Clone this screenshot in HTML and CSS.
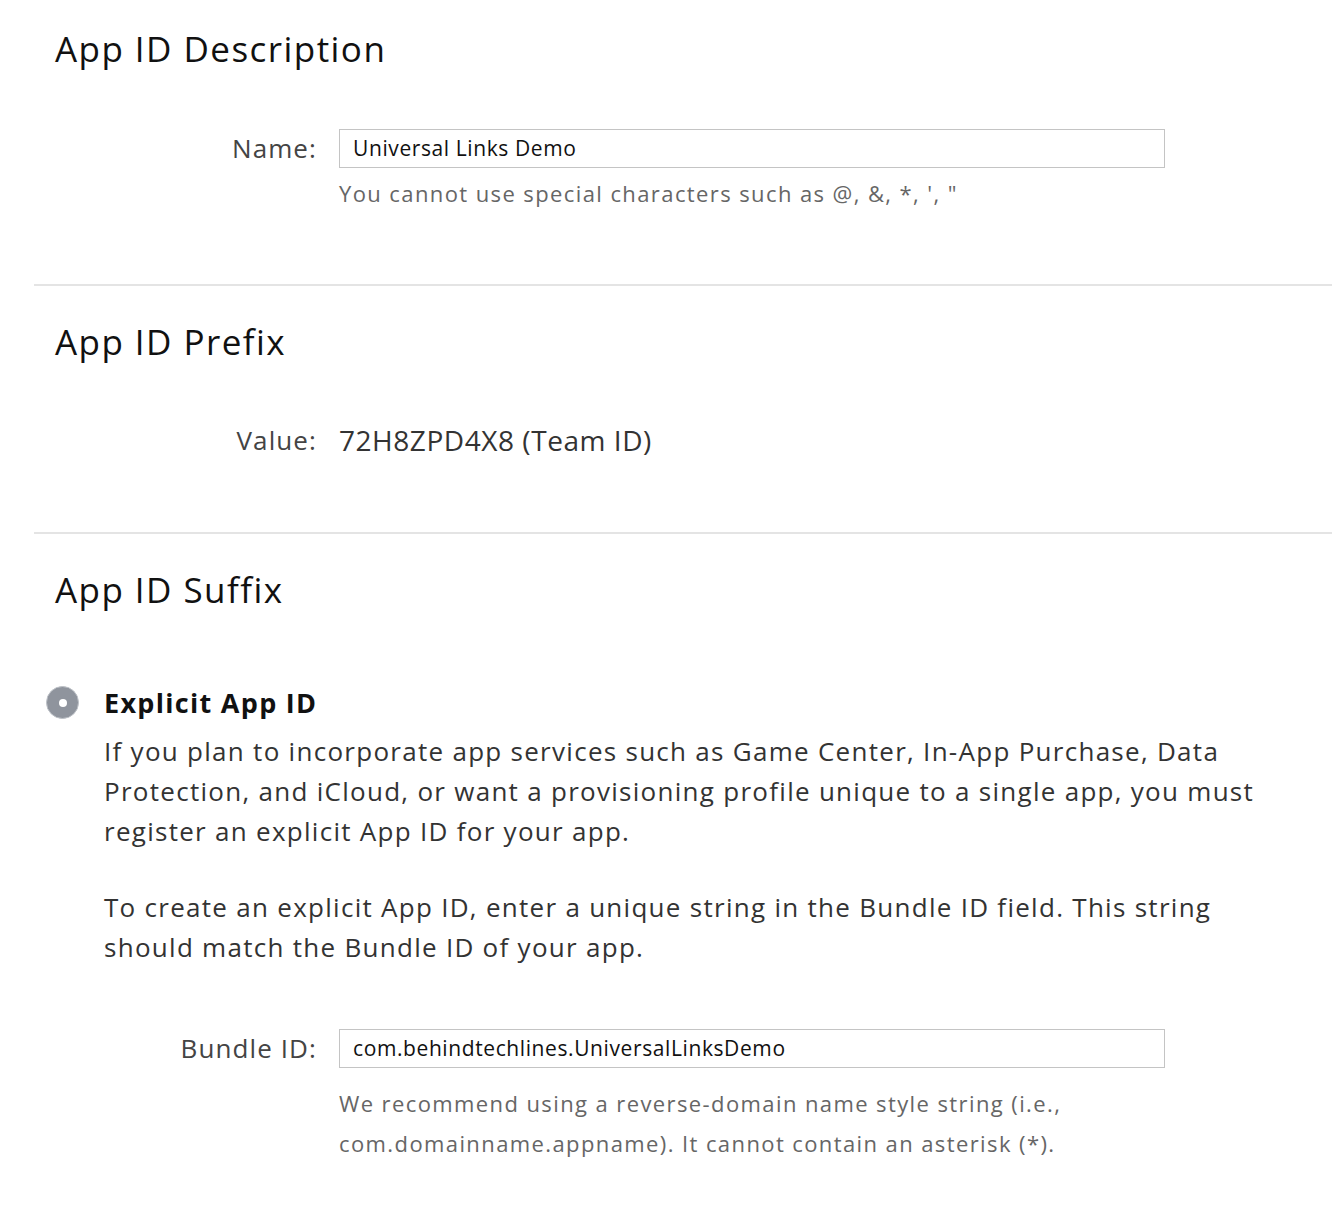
FILE: index.html
```html
<!DOCTYPE html>
<html>
<head>
<meta charset="utf-8">
<link rel="stylesheet" href="styles.css">
</head>
<body>
<div class="page">
  <section class="section section-first">
    <h2 class="title">App ID Description</h2>
    <div class="form-row">
      <div class="label">Name:</div>
      <div class="field">
        <div class="input">Universal Links Demo</div>
        <div class="hint">You cannot use special characters such as @, &amp;, *, ', "</div>
      </div>
    </div>
  </section>
  <hr class="divider">
  <section class="section">
    <h2 class="title">App ID Prefix</h2>
    <div class="form-row value-row">
      <div class="label">Value:</div>
      <div class="value">72H8ZPD4X8 (Team ID)</div>
    </div>
  </section>
  <hr class="divider">
  <section class="section">
    <h2 class="title">App ID Suffix</h2>
    <div class="option">
      <div class="radio"><span class="radio-dot"></span></div>
      <div class="option-body">
        <div class="option-title">Explicit App ID</div>
        <p class="para">If you plan to incorporate app services such as Game Center, In-App Purchase, Data<br>Protection, and iCloud, or want a provisioning profile unique to a single app, you must<br>register an explicit App ID for your app.</p>
        <p class="para">To create an explicit App ID, enter a unique string in the Bundle ID field. This string<br>should match the Bundle ID of your app.</p>
      </div>
    </div>
    <div class="form-row bundle-row">
      <div class="label">Bundle ID:</div>
      <div class="field">
        <div class="input">com.behindtechlines.UniversalLinksDemo</div>
        <div class="hint hint-tall">We recommend using a reverse-domain name style string (i.e.,<br>com.domainname.appname). It cannot contain an asterisk (*).</div>
      </div>
    </div>
  </section>
</div>
</body>
</html>
```

FILE: styles.css
```css
* { box-sizing: border-box; }
html, body { margin: 0; padding: 0; background: #fff; }
body {
  font-family: "Open Sans", "DejaVu Sans", sans-serif;
  color: #333;
  width: 1338px;
  height: 1206px;
  overflow: hidden;
}
.page { padding: 0 6px 0 34px; }
.section { padding: 0 0 0 21px; }
.title {
  margin: 0;
  padding-top: 32px;
  font-size: 35px;
  font-weight: 400;
  line-height: 48px;
  color: #111;
  letter-spacing: 1.45px;
}
.section-first .title { padding-top: 25px; }
.divider {
  margin: 0;
  border: 0;
  height: 2px;
  background: #e4e4e4;
}
.form-row {
  display: flex;
  align-items: flex-start;
  gap: 22px;
  margin-top: 55px;
}
.section-first .form-row { margin-top: 56px; }
.label {
  width: 262px;
  text-align: right;
  font-size: 26px;
  line-height: 39px;
  color: #444;
  letter-spacing: 1.1px;
}
.field { display: flex; flex-direction: column; }
.input {
  width: 826px;
  height: 39px;
  border: 1px solid #c4c4c4;
  padding: 0 13px;
  font-size: 21px;
  line-height: 37px;
  color: #111;
  letter-spacing: 0.6px;
}
.hint {
  margin-top: 5px;
  font-size: 22px;
  line-height: 40px;
  color: #666;
  letter-spacing: 1.4px;
}
.hint-tall { margin-top: 15px; }
.section-first { padding-bottom: 71px; }
.value-row { padding-bottom: 72px; }
.value {
  font-size: 28px;
  line-height: 39px;
  color: #333;
  letter-spacing: 0.55px;
}
.option {
  display: flex;
  align-items: flex-start;
  margin-top: 69px;
  margin-left: -9px;
}
.radio {
  width: 33px;
  height: 33px;
  border-radius: 50%;
  background: #8f949d;
  border: 1px solid #bcc0c6;
  display: flex;
  align-items: center;
  justify-content: center;
  margin-top: 3px;
  flex-shrink: 0;
}
.radio-dot {
  width: 8px;
  height: 8px;
  border-radius: 50%;
  background: #fff;
}
.option-body { margin-left: 25px; }
.option-title {
  font-size: 27px;
  font-weight: 700;
  line-height: 40px;
  color: #111;
  letter-spacing: 1.3px;
}
.para {
  margin: 8px 0 36px;
  font-size: 26px;
  line-height: 40px;
  color: #333;
  letter-spacing: 1.28px;
}
.para + .para { margin-top: 0; }
.bundle-row { margin-top: 26px; }
```
